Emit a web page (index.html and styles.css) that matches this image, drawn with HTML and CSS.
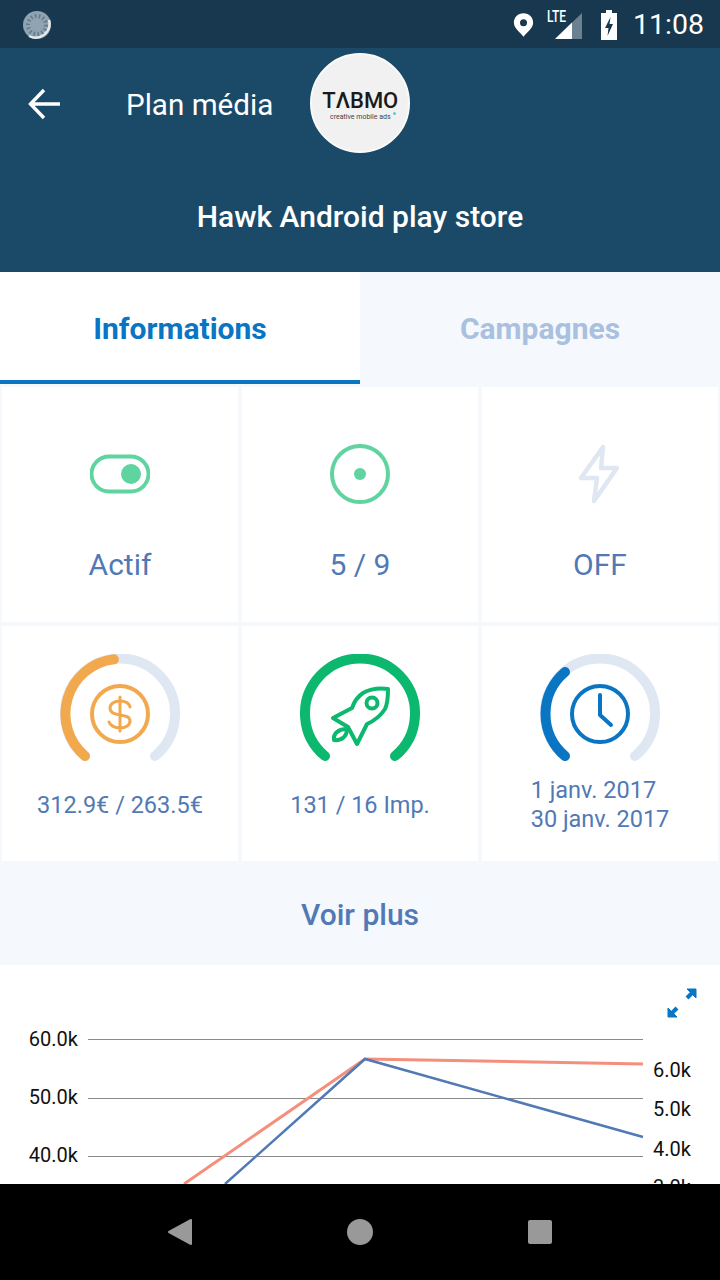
FILE: index.html

```html
<!DOCTYPE html>
<html lang="en">
<head>
    <meta charset="UTF-8">
    <meta name="viewport" content="width=device-width, initial-scale=1.0">
    <title>Plan média</title>
    <link rel="stylesheet" href="styles.css">
</head>
<body>
<div class="screen">

    <div class="statusbar">
        <svg class="status-left" width="32" height="32" viewBox="0 0 32 32">
            <circle cx="16" cy="16" r="14" fill="#8fa3b0"/>
            <path d="M28 11 A14 14 0 0 1 8 27" fill="none" stroke="#e4e9ec" stroke-width="2.5"/>
            <circle cx="16" cy="16" r="9" fill="none" stroke="#5f7a8c" stroke-width="4" stroke-dasharray="1.5 2.5"/>
        </svg>
        <div class="status-right">
            <svg width="21" height="25" viewBox="0 0 24 28">
                <path fill-rule="evenodd" fill="#fff" d="M12 1C5.600 1 1 5.800 1 11.600 1 18.500 8.500 23 12 28c3.500-5 11-9.500 11-16.400C23 5.800 18.400 1 12 1zm0 7a4 4 0 1 1 0 8 4 4 0 0 1 0-8z"/>
            </svg>
            <div class="signal">
                <span class="lte">LTE</span>
                <svg width="28" height="28" viewBox="0 0 28 28">
                    <path d="M27 2V28H0z" fill="#6b8191"/>
                    <path d="M17 11.600V28H0z" fill="#fff"/>
                </svg>
            </div>
            <svg class="battery" width="16" height="30" viewBox="0 0 16 30">
                <path fill="#fff" d="M5 0h6v3h5v27H0V3h5z"/>
                <path fill="#17384f" d="M9.500 7 4 18h3.500l-1 8L12 14H8.500z"/>
            </svg>
            <span class="clock">11:08</span>
        </div>
    </div>

    <div class="header">
        <div class="header-top">
            <svg class="back" width="36" height="36" viewBox="0 0 36 36">
                <path d="M33 18H4M17 4 3.500 18 17 32" fill="none" stroke="#fff" stroke-width="3.400"/>
            </svg>
            <span class="header-title">Plan média</span>
            <div class="logo">
                <span class="logo-name">TΛBMO</span>
                <span class="logo-sub">creative mobile ads</span>
                <span class="logo-dot"></span>
            </div>
        </div>
        <div class="header-name">Hawk Android play store</div>
    </div>

    <div class="tabs">
        <div class="tab tab-active">Informations</div>
        <div class="tab">Campagnes</div>
    </div>

    <div class="grid">
        <div class="tile">
            <svg class="tile-icon" width="60" height="60" viewBox="0 0 60 60">
                <rect x="1.500" y="12.500" width="57" height="35" rx="17.500" fill="none" stroke="#5fd3a0" stroke-width="4"/>
                <circle cx="41" cy="30" r="10" fill="#5fd3a0"/>
            </svg>
            <span class="tile-text">Actif</span>
        </div>
        <div class="tile">
            <svg class="tile-icon" width="60" height="60" viewBox="0 0 60 60">
                <circle cx="30" cy="30" r="28" fill="none" stroke="#5fd3a0" stroke-width="4"/>
                <circle cx="30" cy="30" r="6" fill="#5fd3a0"/>
            </svg>
            <span class="tile-text">5 / 9</span>
        </div>
        <div class="tile">
            <svg class="tile-icon" width="60" height="60" viewBox="0 0 60 60">
                <path d="M33 3 11 34H27L24 57 47 24H31z" fill="none" stroke="#dfe7f3" stroke-width="4.500" stroke-linejoin="round"/>
            </svg>
            <span class="tile-text">OFF</span>
        </div>

        <div class="tile tile-gauge">
            <svg class="gauge" width="120" height="120" viewBox="0 0 120 120">
                <path class="arc-bg" d="M25 102A55 55 0 1 1 95 102"/>
                <path class="arc" stroke="#f2a94e" d="M25 102A55 55 0 0 1 54 5.300"/>
                <circle cx="60" cy="60" r="28" fill="none" stroke="#f2a94e" stroke-width="4"/>
                <path d="M70 53c-1-4-5-6-10-6-6 0-10 3-10 7 0 10 20 4 20 13 0 4-4 7-10 7-6 0-10-3-11-6M60 43v34" fill="none" stroke="#f2a94e" stroke-width="3" stroke-linecap="round"/>
            </svg>
            <span class="gauge-text">312.9€ / 263.5€</span>
        </div>
        <div class="tile tile-gauge">
            <svg class="gauge" width="120" height="120" viewBox="0 0 120 120">
                <path class="arc" stroke="#0cb76e" d="M25 102A55 55 0 1 1 95 102"/>
                <g fill="none" stroke="#0cb76e" stroke-width="4" stroke-linejoin="round" stroke-linecap="round">
                    <path d="M88 35C80 34 70 35 63 39 57 43 54 48 52 54L33 64 48 73 57 90 67 70C74 67 81 61 85 55 87 51 88 43 88 35z"/>
                    <circle cx="72" cy="49" r="5.500"/>
                    <path d="M34 86C33 79 39 75 47 75 47 82 42 87 34 86z"/>
                </g>
            </svg>
            <span class="gauge-text">131 / 16 Imp.</span>
        </div>
        <div class="tile tile-gauge">
            <svg class="gauge" width="120" height="120" viewBox="0 0 120 120">
                <path class="arc-bg" d="M25 102A55 55 0 1 1 95 102"/>
                <path class="arc" stroke="#0a75c2" d="M25 102A55 55 0 0 1 25 18"/>
                <circle cx="60" cy="60" r="28" fill="none" stroke="#0a75c2" stroke-width="4"/>
                <path d="M60 41V61L71 71" fill="none" stroke="#0a75c2" stroke-width="4" stroke-linecap="round" stroke-linejoin="round"/>
            </svg>
            <span class="gauge-text gauge-text-two">1 janv. 2017<br>30 janv. 2017</span>
        </div>
    </div>

    <div class="more">Voir plus</div>

    <div class="chart">
        <svg width="720" height="219" viewBox="0 0 720 219">
            <g fill="#0a75c2" stroke="#0a75c2">
                <path d="M687 24H696V33z" stroke-width="1"/>
                <path d="M692 28 687 33" stroke-width="4"/>
                <path d="M668 43V52H677z" stroke-width="1"/>
                <path d="M672 48 677 43" stroke-width="4"/>
            </g>
            <g stroke="#8a8a8a" stroke-width="1">
                <line x1="88" y1="74.500" x2="643" y2="74.500"/>
                <line x1="88" y1="133.500" x2="643" y2="133.500"/>
                <line x1="88" y1="191.500" x2="643" y2="191.500"/>
            </g>
            <polyline points="184,219 365,94 643,99" fill="none" stroke="#f48f7b" stroke-width="3"/>
            <polyline points="225,219 365,94 643,172" fill="none" stroke="#5179b5" stroke-width="2.500"/>
            <g class="axis">
                <text x="78" y="81" text-anchor="end">60.0k</text>
                <text x="78" y="139" text-anchor="end">50.0k</text>
                <text x="78" y="197" text-anchor="end">40.0k</text>
                <text x="653" y="112">6.0k</text>
                <text x="653" y="151">5.0k</text>
                <text x="653" y="191">4.0k</text>
                <text x="653" y="229">3.0k</text>
            </g>
        </svg>
    </div>

    <div class="navbar">
        <svg width="24" height="26" viewBox="0 0 24 26"><path d="M23 1V25L1 13z" fill="#999" stroke="#999" stroke-width="2" stroke-linejoin="round"/></svg>
        <svg width="26" height="26" viewBox="0 0 26 26"><circle cx="13" cy="13" r="13" fill="#999"/></svg>
        <svg width="24" height="24" viewBox="0 0 24 24"><rect width="24" height="24" rx="2" fill="#999"/></svg>
    </div>

</div>
</body>
</html>
```

FILE: styles.css

```css
* {
    box-sizing: border-box;
}
body {
    margin: 0;
    font-family: Roboto, "Noto Sans", sans-serif;
}
.screen {
    width: 720px;
    height: 1280px;
    display: flex;
    flex-direction: column;
    overflow: hidden;
    background-color: #fff;
}

/* status bar */
.statusbar {
    height: 48px;
    flex: none;
    display: flex;
    align-items: center;
    justify-content: space-between;
    padding: 1px 16px 0 21px;
    background-color: #17384f;
}
.status-right {
    display: flex;
    align-items: center;
}
.signal {
    display: flex;
    margin-left: 13px;
    position: relative;
    width: 36px;
    height: 28px;
    justify-content: flex-end;
}
.lte {
    position: absolute;
    left: 0;
    top: -2px;
    font-size: 16px;
    line-height: 16px;
    font-weight: 500;
    color: #fff;
    transform: scaleX(.75);
    transform-origin: left top;
}
.battery {
    margin-left: 18px;
}
.clock {
    margin-left: 16px;
    font-size: 28.500px;
    color: #fff;
}

/* header */
.header {
    height: 224px;
    flex: none;
    background-color: #1b4a69;
    color: #fff;
    padding-top: 5px;
}
.header-top {
    display: flex;
    align-items: center;
    height: 100px;
}
.back {
    margin: 2px 0 0 27px;
}
.header-title {
    margin: 3px 0 0 63px;
    font-size: 29.600px;
}
.logo {
    position: relative;
    width: 100px;
    height: 100px;
    margin-left: 37px;
    padding-top: 5px;
    border-radius: 50%;
    background-color: #f1f1f1;
    border: 2px solid #fafafa;
    display: flex;
    flex-direction: column;
    align-items: center;
    justify-content: center;
    color: #1a1a1a;
}
.logo-name {
    font-size: 22px;
    font-weight: 500;
    line-height: 24px;
}
.logo-sub {
    font-size: 7px;
    line-height: 9px;
    color: #444;
}
.logo-dot {
    position: absolute;
    left: 81px;
    top: 57px;
    width: 3px;
    height: 3px;
    border-radius: 50%;
    background-color: #5cc8d8;
}
.header-name {
    margin-top: 46px;
    text-align: center;
    font-size: 30px;
    font-weight: 500;
}

/* tabs */
.tabs {
    height: 112px;
    flex: none;
    display: flex;
}
.tab {
    flex: 1;
    display: flex;
    align-items: center;
    justify-content: center;
    font-size: 30px;
    font-weight: 700;
    color: #a9c0de;
    background-color: #f5f8fd;
}
.tab-active {
    color: #0a75c2;
    background-color: #fff;
    border-bottom: 4px solid #0a75c2;
    padding-top: 4px;
}

/* tiles */
.grid {
    flex: none;
    display: grid;
    grid-template-columns: repeat(3, 1fr);
    grid-template-rows: 235px 235px;
    gap: 4px;
    padding: 3px 2px 0;
    background-color: #f5f8fd;
}
.tile {
    display: flex;
    flex-direction: column;
    align-items: center;
    background-color: #fff;
    color: #5179b5;
}
.tile-icon {
    margin-top: 57px;
}
.tile-text {
    margin-top: 43px;
    font-size: 30px;
    line-height: 36px;
}
.gauge {
    margin-top: 28px;
}
.gauge-text {
    margin-top: 17px;
    font-size: 23.500px;
    line-height: 28px;
    text-align: center;
}
.gauge-text-two {
    margin-top: 2px;
    line-height: 29px;
    text-align: left;
}
.arc-bg,
.arc {
    fill: none;
    stroke-width: 10;
    stroke-linecap: round;
}
.arc-bg {
    stroke: #dfe7f3;
}

/* voir plus */
.more {
    height: 104px;
    flex: none;
    display: flex;
    align-items: center;
    justify-content: center;
    padding-top: 3px;
    background-color: #f5f8fd;
    color: #5179b5;
    font-size: 30px;
    font-weight: 500;
}

/* chart */
.chart {
    height: 219px;
    flex: none;
    overflow: hidden;
}
.chart svg {
    display: block;
}
.axis text {
    font-size: 20px;
    fill: #111;
}

/* navigation */
.navbar {
    height: 96px;
    flex: none;
    display: flex;
    align-items: center;
    justify-content: space-between;
    padding: 0 168px 0 168px;
    background-color: #000;
}
```
